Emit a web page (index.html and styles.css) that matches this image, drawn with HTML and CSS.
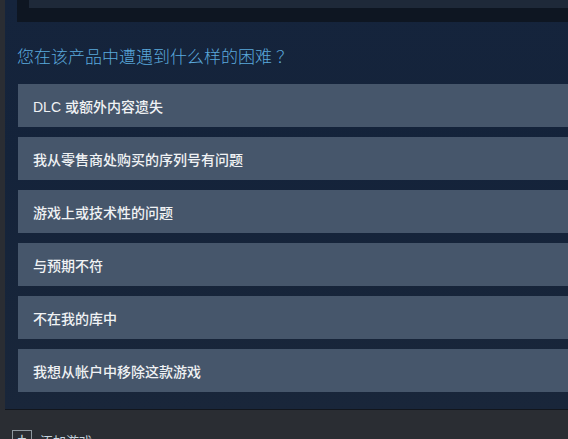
FILE: index.html
```html
<!DOCTYPE html>
<html lang="zh-CN">
<head>
<meta charset="utf-8">
<link rel="stylesheet" href="styles.css">
</head>
<body>
<div class="panel">
  <div class="prev-box"><div class="prev-inner"></div></div>
  <h2 class="question">您在该产品中遭遇到什么样的困难<span class="qmark">？</span></h2>
  <div class="options">
    <div class="option">DLC 或额外内容遗失</div>
    <div class="option">我从零售商处购买的序列号有问题</div>
    <div class="option">游戏上或技术性的问题</div>
    <div class="option">与预期不符</div>
    <div class="option">不在我的库中</div>
    <div class="option">我想从帐户中移除这款游戏</div>
  </div>
</div>
<div class="footer">
  <span class="add-icon">+</span>
  <span class="add-text">添加游戏</span>
</div>
</body>
</html>
```
FILE: styles.css
```css
html, body {
  margin: 0;
  padding: 0;
  height: 100%;
  overflow: hidden;
}
body {
  background: #2a2d33;
  font-family: Arial, "Liberation Sans", "Noto Sans CJK SC", sans-serif;
}
.panel {
  margin-left: 5px;
  width: 600px;
  height: 410px;
  box-sizing: border-box;
  background: linear-gradient(180deg, #15243c 0%, #14233a 40%, #19263a 100%);
  border-bottom: 1px solid #12161d;
  padding-left: 12px;
}
.prev-box {
  height: 22px;
  background: #0e1622;
  padding-left: 12px;
}
.prev-inner {
  height: 8px;
  background: #1e2939;
}
.question {
  margin: 22px 0 0 0;
  font-family: "Noto Sans CJK SC", sans-serif;
  font-weight: 300;
  font-size: 17px;
  line-height: 24px;
  color: #5ba9dc;
}
.qmark {
  margin-left: 4px;
}
.options {
  margin-top: 16px;
  margin-left: 1px;
  display: flex;
  flex-direction: column;
  gap: 10px;
}
.option {
  height: 43px;
  background: #46566b;
  color: #f0f2f4;
  font-family: Arial, "Liberation Sans", "Noto Sans CJK SC", sans-serif;
  font-weight: 500;
  font-size: 14px;
  display: flex;
  align-items: center;
  padding-left: 15px;
}
.footer {
  display: flex;
  align-items: flex-start;
  padding: 20px 0 0 12px;
  gap: 8px;
}
.add-icon {
  width: 18px;
  height: 18px;
  border: 1px solid #8f98a0;
  color: #c6d4df;
  font-size: 16px;
  line-height: 16px;
  text-align: center;
  font-family: Arial, "Liberation Sans", sans-serif;
}
.add-text {
  color: #c6d4df;
  font-size: 13px;
  font-family: "Noto Sans CJK SC", sans-serif;
  line-height: 18px;
  margin-top: 2px;
}
```
